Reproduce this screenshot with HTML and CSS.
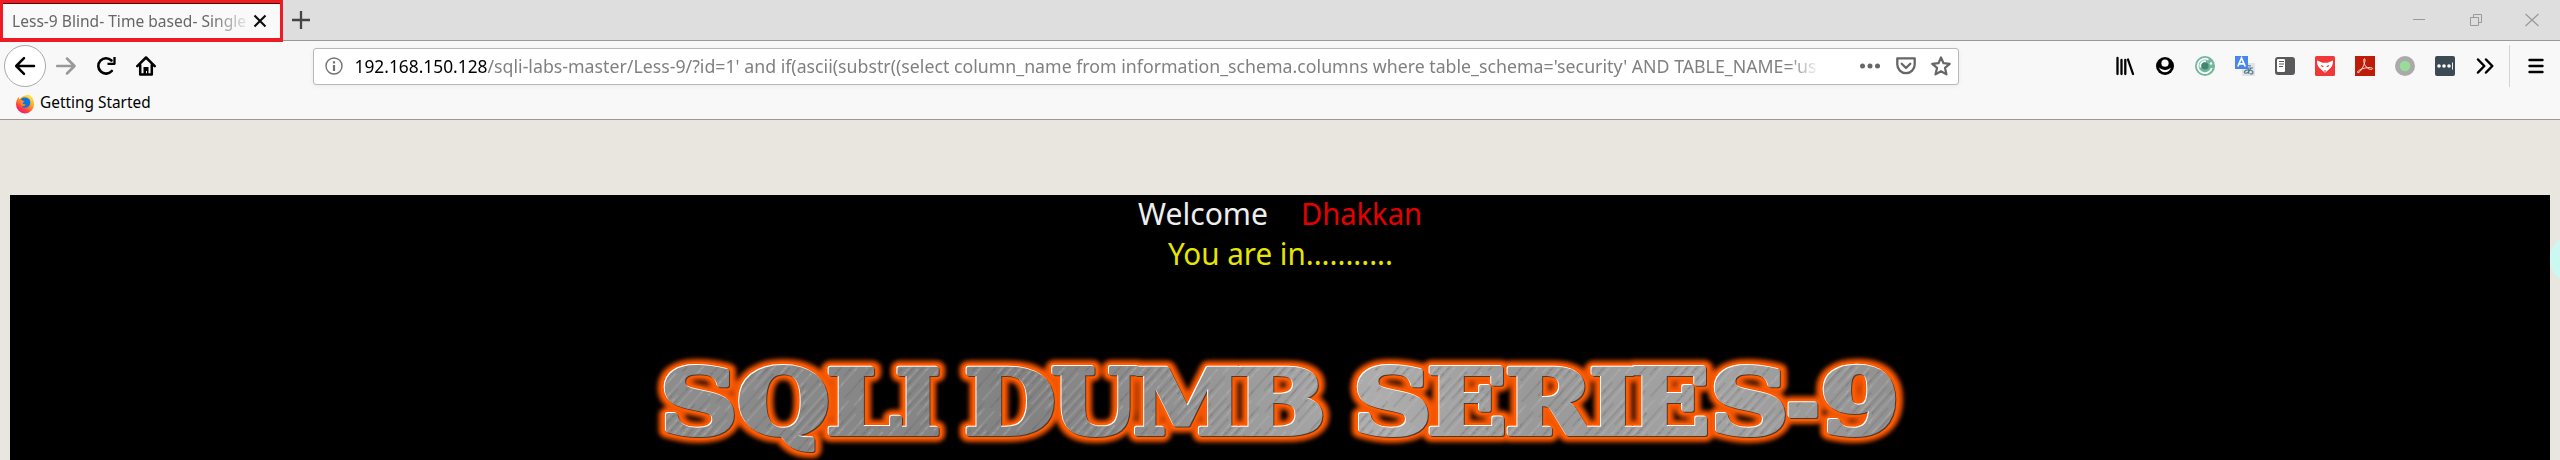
FILE: index.html
```
<!DOCTYPE html>
<html lang="en">
<head>
<meta charset="utf-8">
<title>Less-9 Blind- Time based- Single Quotes</title>
<link rel="stylesheet" href="styles.css">
</head>
<body>
<header class="chrome">
  <div class="tabbar">
    <div class="tab">
      <svg class="tab-title" width="240" height="30" viewBox="0 0 240 30"><text x="0" y="20.500" textLength="234" lengthAdjust="spacingAndGlyphs">Less-9 Blind- Time based- Single</text></svg>
      <svg class="tab-close" width="14" height="14" viewBox="0 0 14 14"><path d="M1.500 1.500l11 11M12.500 1.500l-11 11" stroke="#0c0c0d" stroke-width="2.100"/></svg>
    </div>
    <svg class="new-tab" width="20" height="20" viewBox="0 0 20 20"><path d="M10 1v18M1 10h18" stroke="#444" stroke-width="2.300"/></svg>
    <div class="window-buttons">
      <svg width="14" height="14" viewBox="0 0 14 14"><path d="M1 6.500h12" stroke="#999"/></svg>
      <svg width="14" height="14" viewBox="0 0 14 14" fill="none" stroke="#999"><path d="M1.500 4.500h8v8h-8zM4.500 4.500v-3h8v8h-3"/></svg>
      <svg width="14" height="14" viewBox="0 0 14 14"><path d="M.5 1l13 12M13.500 1L.5 13" stroke="#999" stroke-width="1.200"/></svg>
    </div>
  </div>
  <div class="toolbar">
    <div class="nav">
      <span class="back"><svg width="22" height="20" viewBox="0 0 22 20"><path d="M20 10H2.500M10 2.200L2.200 10l7.800 7.800" fill="none" stroke="#000" stroke-width="2.500" stroke-linecap="round" stroke-linejoin="round"/></svg></span>
      <svg width="20" height="20" viewBox="0 0 20 20"><path d="M1 10h17M11 2.500l7.500 7.500-7.500 7.500" fill="none" stroke="#999" stroke-width="2.500" stroke-linecap="round" stroke-linejoin="round"/></svg>
      <svg width="20" height="20" viewBox="0 0 20 20"><path d="M15.800 15A7.700 7.700 0 1 1 15.500 4.500" fill="none" stroke="#000" stroke-width="2.600" stroke-linecap="round"/><path d="M18.500 1v6.800h-7" fill="none" stroke="#000" stroke-width="2.300" stroke-linejoin="round"/></svg>
      <svg width="20" height="20" viewBox="0 0 20 20"><path d="M1.300 10.200L10 1.500l8.700 8.700M4.200 9v9.500h11.600V9" fill="none" stroke="#000" stroke-width="2.500" stroke-linejoin="round" stroke-linecap="round"/><path d="M7.500 19v-8h5v8h-1.500v-4h-1v4z" fill="#000"/></svg>
    </div>
    <div class="urlbar">
      <svg class="info" width="18" height="18" viewBox="0 0 18 18"><circle cx="9" cy="9" r="8" fill="none" stroke="#737373" stroke-width="1.400"/><path d="M9 8v6M9 4.200v2.200" stroke="#737373" stroke-width="2.200"/></svg>
      <svg class="url" width="1470" height="34" viewBox="354 0 1470 34"><text class="host" x="354.500" y="24" textLength="133" lengthAdjust="spacingAndGlyphs">192.168.150.128</text><text x="487.500" y="24" textLength="1329" lengthAdjust="spacingAndGlyphs">/sqli-labs-master/Less-9/?id=1' and if(ascii(substr((select column_name from information_schema.columns where table_schema='security' AND TABLE_NAME='us</text></svg>
      <div class="url-actions">
        <svg width="20" height="20" viewBox="0 0 20 20" fill="#666"><circle cx="2.500" cy="10" r="2.500"/><circle cx="10" cy="10" r="2.500"/><circle cx="17.500" cy="10" r="2.500"/></svg>
        <svg width="20" height="20" viewBox="0 0 20 20" fill="none" stroke="#666" stroke-width="2.300" stroke-linejoin="round"><path d="M1.300 2.300h17.400v6.200a8.700 8.700 0 0 1-17.400 0z"/><path d="M5.700 7.800L10 12l4.300-4.200" stroke-linecap="round"/></svg>
        <svg width="20" height="20" viewBox="0 0 20 20"><path d="M10 1.500l2.500 5.700 6.200.6-4.700 4.100 1.500 6.500L10 15.200l-5.500 3.200L6 11.900 1.300 7.800l6.200-.6z" fill="none" stroke="#666" stroke-width="2.200" stroke-linejoin="round"/></svg>
      </div>
    </div>
    <div class="extensions">
      <svg viewBox="0 0 20 20"><path d="M2.500 2v16M6.500 4v14M10.300 4v14M13 3.500l5 14.500" stroke="#000" stroke-width="2.300" stroke-linecap="round"/></svg>
      <svg viewBox="0 0 20 20"><circle cx="10" cy="10" r="9"/><circle cx="10" cy="7.200" r="3.600" fill="#f9f9fa"/><path d="M4 11.500c3.500 3.300 8.500 3.300 12 0-.8 3-3.200 4.700-6 4.700s-5.200-1.700-6-4.700z" fill="#f9f9fa"/></svg>
      <svg viewBox="0 0 20 20"><circle cx="10" cy="10" r="10" fill="#73b59b"/><path d="M13.500 3.700A7.200 7.200 0 1 0 16.800 12M5.500 11.500A4.700 4.700 0 0 1 11 5.300" fill="none" stroke="#f4fbf8" stroke-width="1.800"/><circle cx="10" cy="10" r="3.600" fill="#438572"/><circle cx="16" cy="7.500" r="1.300" fill="#fff"/></svg>
      <svg viewBox="0 0 20 20"><path d="M7 7h13v13H7z" fill="#e1e3e5"/><g fill="none" stroke="#527a91" stroke-width="1.200"><path d="M12 9.500l4 .5M10 12h8M16 12c-2 4-4 6-6 5s1-4 5-3 4 4 0 4M13 12l1 6"/></g><path d="M0 0h13v13H0z" fill="#4787ed"/><path d="M2.800 10.500L6.500 2l3.700 8.500M4.200 7.800h4.600" fill="none" stroke="#fff" stroke-width="1.700"/></svg>
      <svg viewBox="0 0 20 20"><rect y="1" width="20" height="18" rx="3" fill="#5a5a5c"/><rect x="2" y="3" width="8" height="13" rx="1" fill="#fff"/><path d="M4 5.500h5M4 8h5M4 10.500h4" stroke="#5a5a5c" stroke-width="1.200"/></svg>
      <svg viewBox="0 0 20 20"><rect width="20" height="20" rx="1.500" fill="#ef3939"/><path d="M2 4.500l5.500 2.300h5L18 4.500c0 3-.5 5-2 7l-5.500 5h-1L4 11.500c-1.500-2-2-4-2-7z" fill="#fff"/><path d="M6 9.500l2.300 1.300M14 9.500l-2.300 1.300M9.300 15h1.400" stroke="#ef3939" stroke-width="1.300"/></svg>
      <svg viewBox="0 0 20 20"><path d="M0 0h20v20H0z" fill="#bd1c08"/><path d="M9 3c-1 3 1 8 5 10 2 .8 4 .3 3.500-.7-1.500-1.600-8-.5-11.500 1-3 1.300-4.200 3-3 3.500C5 17 10.500 8 10 3.500 9.800 2.500 9.200 2.500 9 3z" fill="none" stroke="#ffe8e2" stroke-width=".9"/></svg>
      <svg viewBox="0 0 20 20"><circle cx="10" cy="10" r="10" fill="#aaa"/><circle cx="10" cy="10" r="5.200" fill="#98dc9a"/></svg>
      <svg viewBox="0 0 20 20"><rect width="20" height="20" rx="2" fill="#3c4a54"/><g fill="#fff"><circle cx="4" cy="10" r="1.800"/><circle cx="9" cy="10" r="1.800"/><circle cx="14" cy="10" r="1.800"/><path d="M17 6.500h.9v7H17z"/></g></svg>
      <svg viewBox="0 0 20 20"><path d="M3 3.500L9.300 10 3 16.500M11 3.500l6.300 6.500-6.300 6.500" fill="none" stroke="#000" stroke-width="2.500" stroke-linecap="round" stroke-linejoin="round"/></svg>
    </div>
    <span class="divider"></span>
    <svg class="menu" width="16" height="16" viewBox="0 0 16 16"><path d="M1.500 2h13M1.500 8h13M1.500 14h13" stroke="#000" stroke-width="2.400" stroke-linecap="round"/></svg>
  </div>
  <div class="bookmarks">
    <svg width="20" height="20" viewBox="0 0 20 20">
      <defs><linearGradient id="fox" x1=".8" y1="0" x2=".2" y2="1"><stop offset="0" stop-color="#fff04a"/><stop offset=".45" stop-color="#ff9820"/><stop offset=".75" stop-color="#ff3647"/><stop offset="1" stop-color="#e31587"/></linearGradient></defs>
      <path d="M13.500.5c4 2 5.500 5 5.500 10a9 9 0 0 1-18 0C1 7.500 2 5 3.500 3l1 2.500C7 2 9 2 13.500.5z" fill="url(#fox)"/>
      <path d="M6 5c2-2 6-2 8.500.5 1.500 2.500.8 6-1.500 7.500-2.500 1.500-5.500.8-6.500-1 1.500.7 3 0 4-1L7.500 9.500z" fill="#0b76e0"/>
      <path d="M4.500 5l3 1.500 2 .8-2.200 1.900c.3 1.300 2 1.300 3.500.8-1.300 2-3.200 1.600-4.300 1.500C5 10 4 7.500 4.500 5z" fill="#ff8a1e"/>
    </svg>
    <span class="bookmark-label">Getting Started</span>
  </div>
</header>
<main class="page">
  <section class="content">
    <svg class="greeting" width="340" height="80" viewBox="1110 195 340 80">
      <text class="welcome" x="1138" y="225" textLength="130" lengthAdjust="spacingAndGlyphs">Welcome</text>
      <text class="name" x="1301" y="225" textLength="121" lengthAdjust="spacingAndGlyphs">Dhakkan</text>
      <text class="status" x="1168" y="265" textLength="225" lengthAdjust="spacingAndGlyphs">You are in...........</text>
    </svg>
    <svg class="banner" width="1270" height="110" viewBox="650 350 1270 110">
      <defs>
        <linearGradient id="steel" gradientUnits="userSpaceOnUse" x1="660" y1="440" x2="1900" y2="370"><stop offset="0" stop-color="#8d8d8d"/><stop offset=".3" stop-color="#828282"/><stop offset=".42" stop-color="#929292"/><stop offset=".58" stop-color="#adadad"/><stop offset=".7" stop-color="#999"/><stop offset=".85" stop-color="#a4a4a4"/><stop offset="1" stop-color="#909090"/></linearGradient>
        <pattern id="brush" width="23" height="90" patternUnits="userSpaceOnUse" patternTransform="rotate(42)"><path d="M2 0v60M9 20v70M16 5v50" stroke="#c4c4c4" stroke-opacity=".35" stroke-width="1"/><path d="M5 15v60M12 0v45M20 30v60" stroke="#555" stroke-opacity=".3" stroke-width="1"/></pattern>
        <filter id="soft" x="-5%" y="-30%" width="110%" height="160%"><feGaussianBlur stdDeviation="2.200"/></filter>
        <g id="word" class="word">
          <text x="660" y="434" textLength="78" lengthAdjust="spacingAndGlyphs">S</text>
          <text x="737" y="434" textLength="93" lengthAdjust="spacingAndGlyphs">Q</text>
          <text x="826" y="434" textLength="76" lengthAdjust="spacingAndGlyphs">L</text>
          <text x="895" y="434" textLength="46" lengthAdjust="spacingAndGlyphs">I</text>
          <text x="964" y="434" textLength="92" lengthAdjust="spacingAndGlyphs">D</text>
          <text x="1051" y="434" textLength="88" lengthAdjust="spacingAndGlyphs">U</text>
          <text x="1133" y="434" textLength="110" lengthAdjust="spacingAndGlyphs">M</text>
          <text x="1236" y="434" textLength="90" lengthAdjust="spacingAndGlyphs">B</text>
          <text x="1353" y="434" textLength="79" lengthAdjust="spacingAndGlyphs">S</text>
          <text x="1427" y="434" textLength="80" lengthAdjust="spacingAndGlyphs">E</text>
          <text x="1505" y="434" textLength="88" lengthAdjust="spacingAndGlyphs">R</text>
          <text x="1589" y="434" textLength="48" lengthAdjust="spacingAndGlyphs">I</text>
          <text x="1630" y="434" textLength="80" lengthAdjust="spacingAndGlyphs">E</text>
          <text x="1710" y="434" textLength="79" lengthAdjust="spacingAndGlyphs">S</text>
          <text x="1786" y="434" textLength="34" lengthAdjust="spacingAndGlyphs">-</text>
          <text x="1820" y="434" textLength="80" lengthAdjust="spacingAndGlyphs">9</text>
        </g>
      </defs>
      <use href="#word" class="glow"/>
      <use href="#word" class="edge"/>
      <use href="#word" class="shade" x="1" y="1"/>
      <use href="#word" class="shine" x="-1" y="-1"/>
      <use href="#word" class="metal"/>
      <use href="#word" class="grain"/>
    </svg>
  </section>
  <span class="bubble"></span>
</main>
</body>
</html>
```
FILE: styles.css
```
* { box-sizing: border-box; }
body { margin: 0; width: 2560px; height: 460px; overflow: hidden; background: #e9e6df; font-family: "Noto Sans", "Open Sans", sans-serif; }
svg { display: block; flex: none; }
.chrome { height: 120px; background: #f8f8f8; border-bottom: 1px solid #999; }
.tabbar { height: 41px; display: flex; align-items: center; background: #dedede; border-bottom: 1px solid #999; }
.tab { position: relative; z-index: 1; flex: none; align-self: flex-start; width: 283px; height: 42px; display: flex; align-items: center; padding-left: 9px; background: #f9f9f9; border: 3px solid #ed1c24; border-bottom-width: 4px; box-shadow: inset 0 1px #500; }
.tab-title { font-size: 16px; fill: #666; mask-image: linear-gradient(90deg, #000 198px, transparent 240px); }
.tab-close { margin-left: 1px; }
.new-tab { margin-left: 8px; }
.window-buttons { margin-left: auto; margin-right: 21px; display: flex; gap: 42.5px; }
.toolbar { height: 50px; display: flex; align-items: center; }
.nav { width: 313px; padding-left: 4px; display: flex; align-items: center; gap: 20px; }
.back { width: 42px; height: 42px; margin-right: -10px; display: flex; align-items: center; justify-content: center; border: 1px solid #aaa; border-radius: 50%; background: #fff; }
.urlbar { width: 1646px; height: 37px; display: flex; align-items: center; padding: 0 7px 0 11px; background: #fff; border: 1px solid #b8b8b8; border-radius: 3px; box-shadow: 0 1px 5px rgba(0,0,0,.06); }
.url { margin-left: 11px; font-size: 18px; fill: #808080; mask-image: linear-gradient(90deg, #000 1435px, transparent 1466px); }
.host { fill: #000; }
.url-actions { margin-left: auto; display: flex; gap: 15.5px; }
.extensions { margin-left: 156px; display: flex; gap: 20px; }
.extensions svg { width: 20px; height: 20px; }
.divider { width: 1px; height: 42px; margin-left: 14px; background: #d4d4d4; }
.menu { margin-left: 18px; }
.bookmarks { height: 25px; display: flex; align-items: center; padding-left: 15px; gap: 5px; font-size: 15.4px; line-height: 24px; color: #000; }
.bookmark-label { padding-bottom: 2px; }
.page { position: relative; height: 340px; padding: 75px 10px 0; background: #e9e6df; }
.content { height: 265px; background: #000; display: flex; flex-direction: column; align-items: center; }
.greeting { font-size: 30.5px; }
.welcome { fill: #eee; }
.name { fill: #e60000; }
.status { fill: #e6e600; }
.banner { margin: 75px 0 0 10px; }
.word { font-family: "DejaVu Serif", serif; font-weight: 700; font-size: 90px; stroke-linejoin: round; }
.glow { fill: #f45500; stroke: #f45500; stroke-width: 16px; filter: url(#soft); }
.edge { fill: #fc5b00; stroke: #fc5b00; stroke-width: 10px; }
.shade { fill: #4a3a32; stroke: #4a3a32; stroke-width: 4px; }
.shine { fill: #fff; stroke: #fff; stroke-width: 4px; }
.metal { fill: url(#steel); stroke: url(#steel); stroke-width: 4px; }
.grain { fill: url(#brush); stroke: url(#brush); stroke-width: 4px; }
.bubble { position: absolute; right: -30px; top: 116px; width: 40px; height: 46px; border-radius: 50%; background: #ccf8f2; }
```
